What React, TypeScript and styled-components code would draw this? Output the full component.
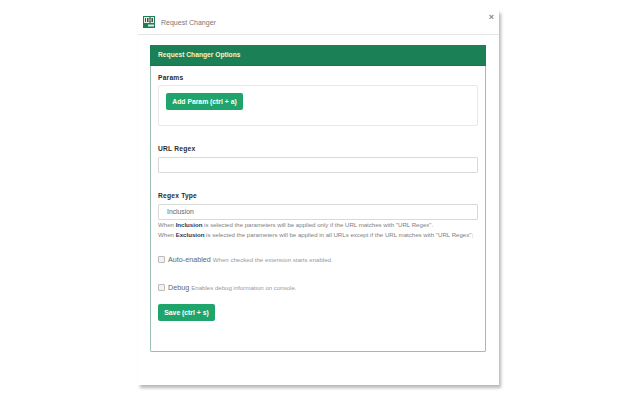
import React from "react";
import styled, { createGlobalStyle } from "styled-components";

const Global = createGlobalStyle`
  html, body { margin: 0; padding: 0; background: #fff; width: 640px; height: 400px; overflow: hidden; }
  body { font-family: "Liberation Sans", Arial, sans-serif; color: #333; }
`;
const Page = styled.div`padding: 10px 0 0 138px;`;
const Modal = styled.div`
  box-sizing: border-box; width: 361px; height: 375px; padding-top: 1px;
  background: #fff; box-shadow: 2px 3px 3px rgba(0,0,0,.28);
`;
const Header = styled.div`
  box-sizing: border-box; height: 24px; display: flex; align-items: flex-start;
  padding: 5px 5px 0 5px; border-bottom: 1px solid #e5e5e5;
`;
const Title = styled.span`font-size: 7px; line-height: 12px; color: #777; margin-left: 6px; margin-top: 1px;`;
const Close = styled.span`margin-left: auto; margin-top: -3px; font-size: 9px; line-height: 9px; font-weight: 700; color: #888;`;
const Panel = styled.div`
  box-sizing: border-box; width: 336px; height: 307px; margin: 10px 0 0 12px;
  border: 1px solid #9bbfb0; border-radius: 1px;
`;
const PanelHead = styled.div`
  box-sizing: border-box; height: 21px; margin: -1px -1px 0; padding: 0 8px; background: #1b8055;
  border-bottom: 1px solid #0f7a4c; color: #f3f6c8; font-size: 6.7px; font-weight: 700; line-height: 20px;
`;
const PanelBody = styled.div`padding: 7px 7px 0;`;
const Label = styled.div<{ $top?: number }>`
  font-size: 6.7px; line-height: 10px; font-weight: 700; color: #2b2b2b; letter-spacing: .2px; margin-top: ${p => p.$top ?? 0}px;
`;
const Well = styled.div`
  box-sizing: border-box; height: 41px; margin-top: 2px; padding: 7px; border: 1px solid #e8e8e8; border-radius: 2px;
`;
const GreenButton = styled.button`
  display: block; box-sizing: border-box; height: 17px; padding: 0; border: 0; border-radius: 2px;
  background: #1fa56b; color: #fff; font: 700 6.8px/17px "Liberation Sans", Arial, sans-serif; text-align: center;
`;
const AddButton = styled(GreenButton)`width: 77px;`;
const SaveButton = styled(GreenButton)`width: 57px; margin-top: 11px;`;
const Field = styled.div`
  box-sizing: border-box; height: 16px; margin-top: 3px; padding-left: 8px; border: 1px solid #d9d9d9; border-radius: 1px;
  font-size: 6.8px; line-height: 14px; color: #666;
`;
const Help = styled.div`font-size: 6.1px; line-height: 10px; color: #808080; white-space: nowrap;`;
const Strong = styled.b`color: #1f3350;`;
const CheckRow = styled.div<{ $top: number }>`
  display: flex; align-items: center; height: 12px; margin-top: ${p => p.$top}px; white-space: nowrap;
`;
const Box = styled.span`
  box-sizing: border-box; width: 7px; height: 7px; border: 1px solid #bbb; border-radius: 1px; background: #f2f2f2; margin-right: 3px;
`;
const CheckName = styled.span`font-size: 7.2px; color: #666; margin-right: 2px;`;
const CheckHint = styled.span`font-size: 6.1px; color: #999;`;

const Logo = () => (
  <svg width="12" height="12" viewBox="0 0 12 12" style={{ flex: "none" }}>
    <rect width="12" height="12" fill="#1b8055" />
    <rect x="1" y="1" width="10" height="6" fill="#e8efe8" />
    <path d="M2.5 2v4M4.5 2v4M6 2h2v4H6zM9.5 2v4" stroke="#222" strokeWidth=".8" fill="none" />
    <rect x="5" y="8.5" width="6" height="2" fill="#dfe9e3" />
  </svg>
);

export default function App() {
  return (
    <Page>
      <Global />
      <Modal>
        <Header>
          <Logo />
          <Title>Request Changer</Title>
          <Close>×</Close>
        </Header>
        <Panel>
          <PanelHead>Request Changer Options</PanelHead>
          <PanelBody>
            <Label>Params</Label>
            <Well>
              <AddButton>Add Param (ctrl + a)</AddButton>
            </Well>
            <Label $top={18}>URL Regex</Label>
            <Field />
            <Label $top={18}>Regex Type</Label>
            <Field>Inclusion</Field>
            <div>
              <Help>When <Strong>Inclusion</Strong> is selected the parameters will be applied only if the URL matches with "URL Regex".</Help>
              <Help>When <Strong>Exclusion</Strong> is selected the parameters will be applied in all URLs except if the URL matches with "URL Regex";</Help>
            </div>
            <CheckRow $top={13}>
              <Box /><CheckName>Auto-enabled</CheckName><CheckHint>When checked the extension starts enabled.</CheckHint>
            </CheckRow>
            <CheckRow $top={16}>
              <Box /><CheckName>Debug</CheckName><CheckHint>Enables debug information on console.</CheckHint>
            </CheckRow>
            <SaveButton>Save (ctrl + s)</SaveButton>
          </PanelBody>
        </Panel>
      </Modal>
    </Page>
  );
}
